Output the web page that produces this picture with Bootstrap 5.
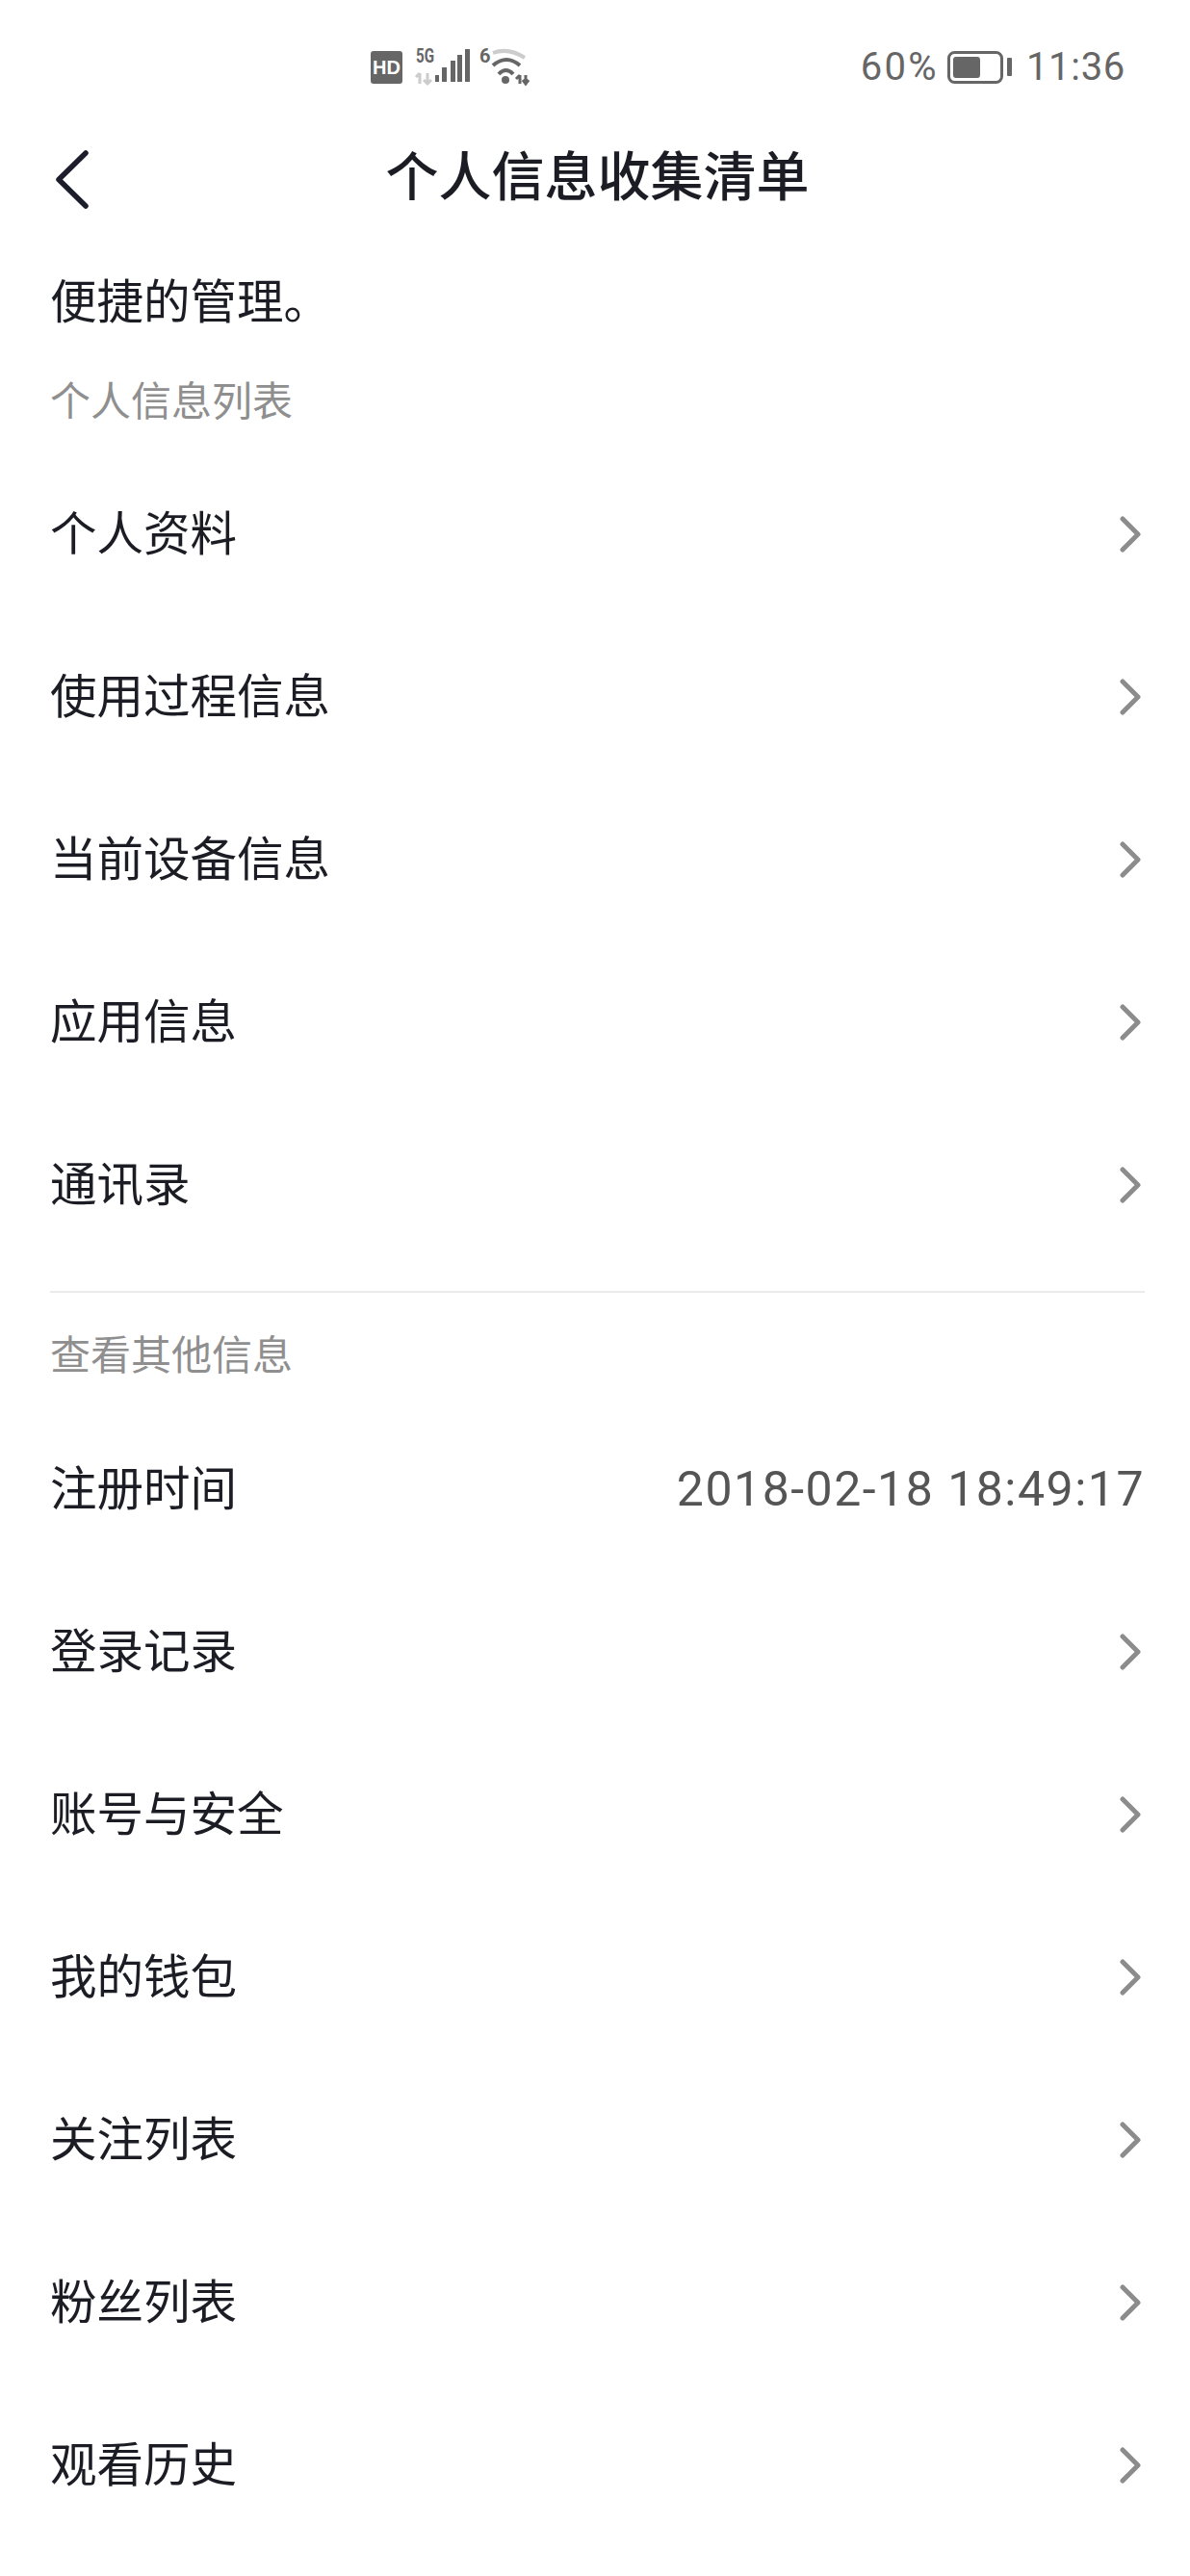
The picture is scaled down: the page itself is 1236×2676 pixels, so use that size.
<!DOCTYPE html>
<html lang="zh-CN">
<head>
<meta charset="utf-8">
<title>个人信息收集清单</title>
<link href="https://cdn.jsdelivr.net/npm/bootstrap@5.3.0/dist/css/bootstrap.min.css" rel="stylesheet">
<style>
html,body{background:#fff;height:2676px;overflow:hidden}
body{font-family:"Liberation Sans","Noto Sans CJK SC",sans-serif;color:#1c1d24}
.screen{width:1236px;height:2676px;padding:0 47px 0 52px;background:#fff}
.statusbar{height:97px;padding:46px 20px 0 333px;color:#666}
.status-text{font-family:Roboto,sans-serif;font-size:40px;line-height:48px;color:#666}
.pct-text{letter-spacing:2.3px}
.time-text{letter-spacing:.7px}
.batt-icon{margin:0 15px 0 9px}
.titlebar{height:85px;margin-top:45px}
.title-text{font-size:55px;line-height:85px;font-weight:500}
.back-icon{left:0;top:13px}
.intro{font-size:48.500px;line-height:68px;margin-top:53px}
.section-head{font-size:42px;line-height:60px;color:#8f8f8f}
.first-head{margin-top:40px}
.info-row{height:169px;font-size:48.500px;line-height:68px}
.info-row svg{margin-right:3px}
.value-text{font-family:Roboto,sans-serif;font-size:50px;color:#555;letter-spacing:1.5px}
.rule{height:2px;background:#ebebeb;margin:26px 0 36px}
.first-list{margin-top:22px}
.second-list{margin-top:23px}
</style>
</head>
<body>
<div class="screen">
  <div class="statusbar d-flex align-items-start justify-content-between">
    <svg width="170" height="48" viewBox="0 0 170 48" aria-hidden="true">
      <rect x="0" y="7" width="33" height="34" rx="3" fill="#666"/>
      <text x="16.5" y="31" text-anchor="middle" font-family="Liberation Sans" font-weight="700" font-size="20" fill="#fff">HD</text>
      <text x="47" y="19" font-family="Roboto" font-weight="700" font-size="20" fill="#666" textLength="19" lengthAdjust="spacingAndGlyphs">5G</text>
      <path d="M51 30v11M47 34l4-4M59 30v11M55 37l4 4 4-4" fill="none" stroke="#ccc" stroke-width="3"/>
      <rect x="67" y="32" width="4" height="7" fill="#666"/>
      <rect x="74" y="24" width="5" height="15" fill="#666"/>
      <rect x="83" y="17" width="5" height="22" fill="#666"/>
      <rect x="90" y="11" width="5" height="28" fill="#666"/>
      <rect x="98" y="5" width="5" height="34" fill="#666"/>
      <text x="113" y="19" font-family="Roboto" font-weight="700" font-size="20" fill="#666">6</text>
      <path d="M127 9q16-6 33 5" fill="none" stroke="#ccc" stroke-width="4"/>
      <path d="M127 22q14-12 28 0" fill="none" stroke="#666" stroke-width="4"/>
      <path d="M133 31q7.500-8 15 0" fill="none" stroke="#666" stroke-width="4"/>
      <circle cx="140" cy="37" r="4" fill="#666"/>
      <path d="M155 32v9M151 36l4-4M161 32v9M158 37l3 4 3-4" fill="none" stroke="#666" stroke-width="3"/>
    </svg>
    <div class="d-flex align-items-center">
      <span class="status-text pct-text">60%</span>
      <svg class="batt-icon" width="67" height="34" viewBox="0 0 67 34" aria-hidden="true">
        <rect x="1.500" y="1.500" width="55" height="31" rx="6" fill="none" stroke="#666" stroke-width="3"/>
        <rect x="6" y="6" width="28" height="22" rx="3" fill="#666"/>
        <rect x="62" y="7" width="5" height="19" rx="1" fill="#666"/>
      </svg>
      <span class="status-text time-text">11:36</span>
    </div>
  </div>

  <div class="titlebar position-relative text-center">
    <svg class="back-icon position-absolute" width="44" height="64" viewBox="0 0 44 64" aria-hidden="true">
      <path d="M37 4 9 31.500 37 59" fill="none" stroke="#1c1d2b" stroke-width="5.500" stroke-linecap="round" stroke-linejoin="round"/>
    </svg>
    <div class="title-text">个人信息收集清单</div>
  </div>

  <div class="intro">便捷的管理。</div>
  <div class="section-head first-head">个人信息列表</div>

  <div class="first-list">
    <div class="info-row d-flex align-items-center justify-content-between"><span>个人资料</span><svg width="24" height="38" viewBox="0 0 24 38" aria-hidden="true"><path d="M4 3l16 16L4 35" fill="none" stroke="#8c8c8c" stroke-width="5" stroke-linecap="round" stroke-linejoin="round"/></svg></div>
    <div class="info-row d-flex align-items-center justify-content-between"><span>使用过程信息</span><svg width="24" height="38" viewBox="0 0 24 38" aria-hidden="true"><path d="M4 3l16 16L4 35" fill="none" stroke="#8c8c8c" stroke-width="5" stroke-linecap="round" stroke-linejoin="round"/></svg></div>
    <div class="info-row d-flex align-items-center justify-content-between"><span>当前设备信息</span><svg width="24" height="38" viewBox="0 0 24 38" aria-hidden="true"><path d="M4 3l16 16L4 35" fill="none" stroke="#8c8c8c" stroke-width="5" stroke-linecap="round" stroke-linejoin="round"/></svg></div>
    <div class="info-row d-flex align-items-center justify-content-between"><span>应用信息</span><svg width="24" height="38" viewBox="0 0 24 38" aria-hidden="true"><path d="M4 3l16 16L4 35" fill="none" stroke="#8c8c8c" stroke-width="5" stroke-linecap="round" stroke-linejoin="round"/></svg></div>
    <div class="info-row d-flex align-items-center justify-content-between"><span>通讯录</span><svg width="24" height="38" viewBox="0 0 24 38" aria-hidden="true"><path d="M4 3l16 16L4 35" fill="none" stroke="#8c8c8c" stroke-width="5" stroke-linecap="round" stroke-linejoin="round"/></svg></div>
  </div>

  <div class="rule"></div>
  <div class="section-head">查看其他信息</div>

  <div class="second-list">
    <div class="info-row d-flex align-items-center justify-content-between"><span>注册时间</span><span class="value-text">2018-02-18 18:49:17</span></div>
    <div class="info-row d-flex align-items-center justify-content-between"><span>登录记录</span><svg width="24" height="38" viewBox="0 0 24 38" aria-hidden="true"><path d="M4 3l16 16L4 35" fill="none" stroke="#8c8c8c" stroke-width="5" stroke-linecap="round" stroke-linejoin="round"/></svg></div>
    <div class="info-row d-flex align-items-center justify-content-between"><span>账号与安全</span><svg width="24" height="38" viewBox="0 0 24 38" aria-hidden="true"><path d="M4 3l16 16L4 35" fill="none" stroke="#8c8c8c" stroke-width="5" stroke-linecap="round" stroke-linejoin="round"/></svg></div>
    <div class="info-row d-flex align-items-center justify-content-between"><span>我的钱包</span><svg width="24" height="38" viewBox="0 0 24 38" aria-hidden="true"><path d="M4 3l16 16L4 35" fill="none" stroke="#8c8c8c" stroke-width="5" stroke-linecap="round" stroke-linejoin="round"/></svg></div>
    <div class="info-row d-flex align-items-center justify-content-between"><span>关注列表</span><svg width="24" height="38" viewBox="0 0 24 38" aria-hidden="true"><path d="M4 3l16 16L4 35" fill="none" stroke="#8c8c8c" stroke-width="5" stroke-linecap="round" stroke-linejoin="round"/></svg></div>
    <div class="info-row d-flex align-items-center justify-content-between"><span>粉丝列表</span><svg width="24" height="38" viewBox="0 0 24 38" aria-hidden="true"><path d="M4 3l16 16L4 35" fill="none" stroke="#8c8c8c" stroke-width="5" stroke-linecap="round" stroke-linejoin="round"/></svg></div>
    <div class="info-row d-flex align-items-center justify-content-between"><span>观看历史</span><svg width="24" height="38" viewBox="0 0 24 38" aria-hidden="true"><path d="M4 3l16 16L4 35" fill="none" stroke="#8c8c8c" stroke-width="5" stroke-linecap="round" stroke-linejoin="round"/></svg></div>
  </div>
</div>
<script src="https://cdn.jsdelivr.net/npm/bootstrap@5.3.0/dist/js/bootstrap.bundle.min.js"></script>
</body>
</html>
